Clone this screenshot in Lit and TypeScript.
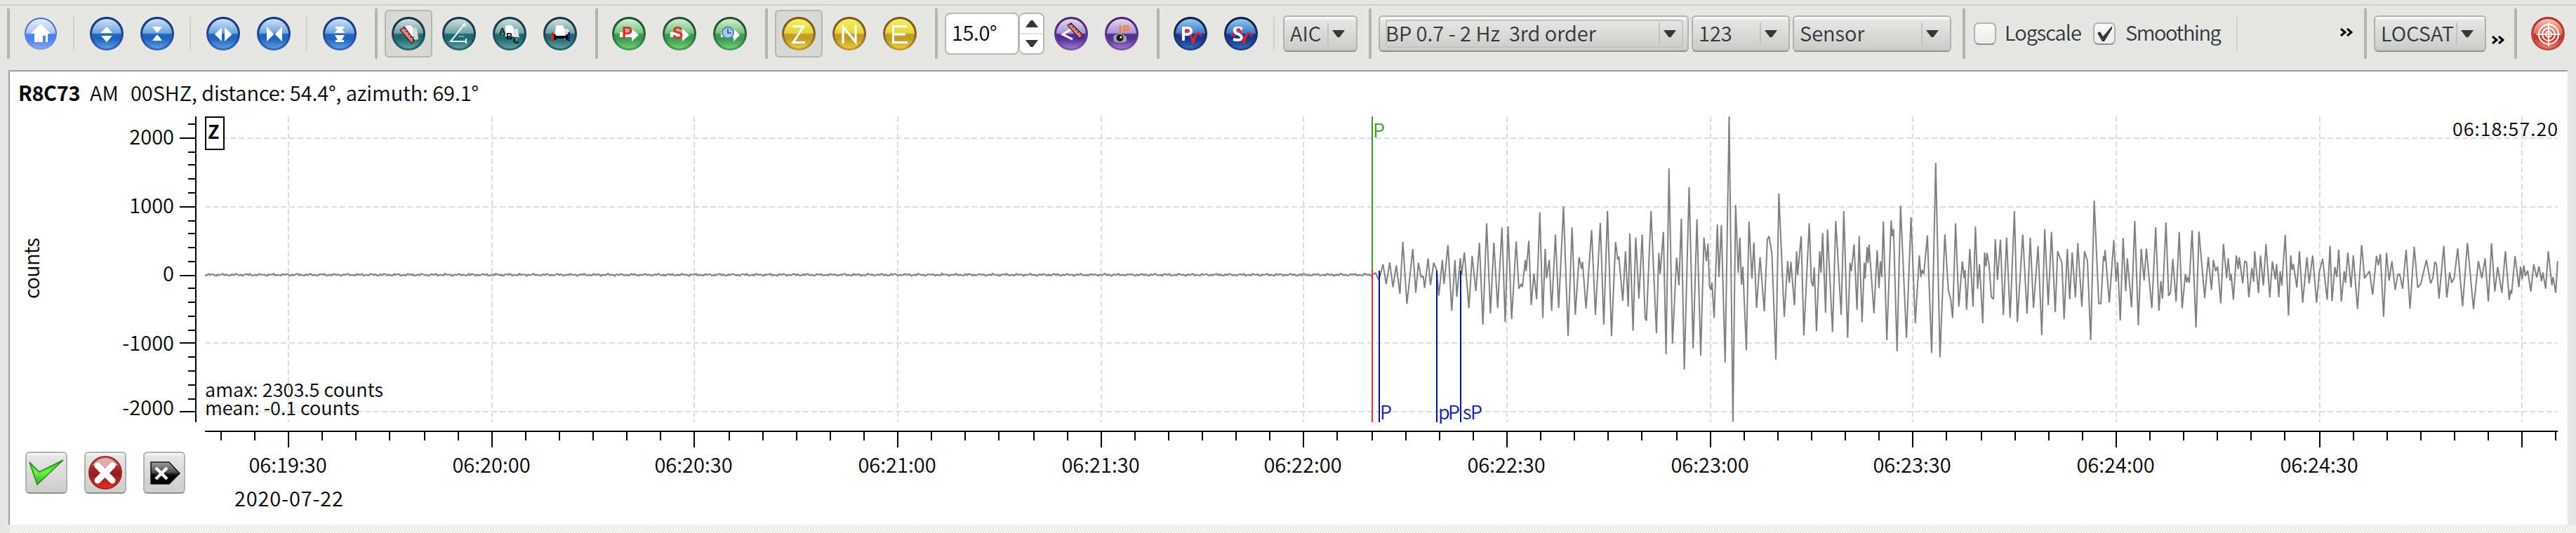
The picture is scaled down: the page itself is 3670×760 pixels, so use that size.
import { LitElement, css, html, svg } from 'lit';
import type { SVGTemplateResult, TemplateResult } from 'lit';
import { customElement, property } from 'lit/decorators.js';
import { classMap } from 'lit/directives/class-map.js';

type Tone = 'home' | 'blue' | 'teal' | 'green' | 'gold' | 'purple' | 'navy' | 'red';

interface Palette {
	rim: string;
	rimLow: string;
	top: string;
	mid: string;
	core: string;
	low: string;
}

const palettes: Record<Tone, Palette> = {
	home: { rim: '#3c68d8', rimLow: '#7f9ad8', top: '#e4eaf8', mid: '#b4c6f0', core: '#4a82f8', low: '#8aa4e0' },
	blue: { rim: '#0d2f86', rimLow: '#3c6cc0', top: '#cfe2f2', mid: '#6ea4dc', core: '#1f66c0', low: '#5f9ae0' },
	teal: { rim: '#0f2c40', rimLow: '#2a6a70', top: '#cfe0e0', mid: '#6fa4a6', core: '#1f6a70', low: '#5fa0a4' },
	green: { rim: '#1c4a30', rimLow: '#48a858', top: '#d4f0d0', mid: '#72c47c', core: '#3a9c50', low: '#72cc74' },
	gold: { rim: '#7c5214', rimLow: '#c8a030', top: '#f4f068', mid: '#e4d43c', core: '#c49c28', low: '#e4cc3c' },
	purple: { rim: '#4c2070', rimLow: '#8458a8', top: '#e0d8f0', mid: '#a894d4', core: '#54309c', low: '#9478c8' },
	navy: { rim: '#0a1440', rimLow: '#204890', top: '#90c8ec', mid: '#3c7cc8', core: '#143890', low: '#3468b8' },
	red: { rim: '#b42c2c', rimLow: '#c84c40', top: '#f4c0b4', mid: '#e07060', core: '#c83c30', low: '#e88070' },
};

const glyphs: Record<string, SVGTemplateResult> = {
	home: svg`<path fill="#fff" d="M24 10 38 24H34V36H31V27H27V36H15V24H10Z"/>`,
	tall: svg`<path fill="#fff" d="M24 14 32.500 23H15.500ZM24 36 16 27H32Z"/>`,
	squash: svg`<path fill="#fff" d="M17 14H31L25 22H23ZM17 34H31L25 26H23Z"/>`,
	wide: svg`<path fill="#fff" d="M22 15V35L12 25ZM26 15V35L36.500 25Z"/>`,
	narrow: svg`<path fill="#fff" d="M14 14 24 25 14 35ZM36 14 26 25 36 35Z"/>`,
	fit: svg`<path fill="#fff" d="M18 14H30V17H27L31 23H17L21 17H18ZM17 26H31L27 33H30V36H18V33H21Z"/>`,
	ruler: svg`
		<path fill="#d4dada" stroke="#a0a8a8" stroke-width=".7" d="M29 15H36L38 32 32 33Z"/>
		<path fill="#fff" stroke="#a8b0b0" stroke-width=".7" d="M19 12H28L31 17 32 28H19Z"/>
		<path fill="#f07c7c" stroke="#302020" stroke-width="1.2" d="M12 19 18 14 32 33 29 38Z"/>
		<path stroke="#301818" stroke-width="1.4" stroke-dasharray="2 3" fill="none" d="M18 16 31 34"/>`,
	angle: svg`
		<path fill="none" stroke="#f4f8f8" stroke-width="2" d="M33 9 12 35H34M34 31V38M29 11 34 13"/>
		<path stroke="#9cc4c4" stroke-width="2" stroke-dasharray="2 1" d="M24 28H31"/>`,
	abc: svg`
		<path fill="#e0e4e4" d="M30 17H36L38 32H31Z"/>
		<path fill="#fff" d="M18 13Q24 10 29 14L31 28H18Z"/>
		<g fill="#080c10" font-weight="700" font-size="13">
			<text x="9" y="25">A</text><text x="19" y="32">B</text><text x="29" y="38">C</text>
		</g>`,
	span: svg`
		<path fill="#dce0e0" d="M30 17H36L38 32H30Z"/>
		<path fill="#fff" d="M18 12H27L30 16V28H16Z"/>
		<path fill="#080c10" d="M14 25H18V27H32V25H35V33H32V31H18V33H14Z"/>
		<path stroke="#f01c1c" stroke-width="3" d="M13.500 22V35"/>
		<path stroke="#202080" stroke-width="3" d="M36.500 22V35"/>`,
	pickP: svg`
		<path fill="#fff" d="M11 22H28V17L38 26 28 35V29H11Z"/>
		<text x="14" y="31" fill="#f02828" font-weight="900" font-size="23">P</text>`,
	pickS: svg`
		<path fill="#fff" d="M11 22H28V17L38 26 28 35V29H11Z"/>
		<text x="14" y="31" fill="#f02828" font-weight="900" font-size="23">S</text>`,
	pickClock: svg`
		<path fill="#fff" d="M11 22H30V18L38 26 29 35V29H11Z"/>
		<circle cx="21" cy="22.500" r="8" fill="#a8c8ec" stroke="#5484b8" stroke-width="2"/>
		<path fill="none" stroke="#284c80" stroke-width="1.500" d="M21 17V23H26"/>`,
	letterZ: svg`<path fill="none" stroke="#fff" stroke-width="3" d="M15 13.500H31L16 36.500H33"/>`,
	letterN: svg`<path fill="none" stroke="#fff" stroke-width="3" d="M15 38V14L33 36V12"/>`,
	letterE: svg`<path fill="none" stroke="#fff" stroke-width="3" d="M34 13.500H14.500V36.500H35M15 25H32"/>`,
	alignRuler: svg`
		<path fill="none" stroke="#fff" stroke-width="3" d="M25 17 12 25 26 32"/>
		<path fill="#f08080" stroke="#201820" stroke-width="1.2" d="M19 12 24 9 41 26 36 31Z"/>
		<path stroke="#301820" stroke-width="1.5" stroke-dasharray="2 3" d="M23 10 39 27"/>`,
	eyeIp: svg`
		<path stroke="#e88840" stroke-width="3" d="M22 12V29"/>
		<path fill="none" stroke="#f08838" stroke-width="3" d="M27.500 22V13.500H33V19H28"/>
		<path fill="#a4a4a0" d="M12 28Q22 20 31 29V35Q22 38 13 35Z"/>
		<circle cx="21.500" cy="30" r="5" fill="#181818"/><circle cx="23" cy="29" r="1.500" fill="#fff"/>`,
	autoP: svg`
		<path fill="none" stroke="#f02020" stroke-width="2.500" d="M9 26 14 27 18 17 22 18 28 36 33 24 36 23 40 28"/>
		<path fill="none" stroke="#fff" stroke-width="4" d="M14 34V16H20Q25 16 25 20.500 25 25 20 25H15"/>
		<path fill="none" stroke="#f02020" stroke-width="3" d="M17 19H22M24 25 28 36 31 26"/>`,
	autoS: svg`
		<path fill="none" stroke="#f02020" stroke-width="2.500" d="M9 26 14 27 18 17 22 18 28 36 33 24 36 23 40 28"/>
		<path fill="none" stroke="#fff" stroke-width="4" d="M26 17Q14 14 15 20 16 24 21 25 27 28 24 32 20 34 13 32"/>
		<path fill="none" stroke="#f02020" stroke-width="3" d="M18 18H23M26 32 28 36 31 26"/>`,
	target: svg`
		<g fill="none" stroke="#fff" stroke-width="2">
			<circle cx="25" cy="25" r="14"/><circle cx="25" cy="25" r="9"/><circle cx="25" cy="25" r="4"/>
			<path d="M25 8V42M8 25H42"/>
		</g>`,
};

@customElement('orb-button')
export class OrbButtonElement extends LitElement {
	@property() tone: Tone = 'blue';
	@property() glyph = 'tall';
	@property({ type: Boolean, reflect: true }) checked = false;

	render() {
		const p = palettes[this.tone];
		return html`<svg viewBox="0 0 48 48" width="48" height="48">
			<defs>
				<linearGradient id="rim" x2="0" y2="1">
					<stop stop-color=${p.rim} />
					<stop offset=".5" stop-color=${p.rim} stop-opacity=".9" />
					<stop offset="1" stop-color=${p.rimLow} />
				</linearGradient>
				<linearGradient id="body" x2="0" y2="1">
					<stop stop-color=${p.top} />
					<stop offset=".48" stop-color=${p.mid} />
					<stop offset=".52" stop-color=${p.core} />
					<stop offset=".68" stop-color=${p.core} />
					<stop offset="1" stop-color=${p.low} />
				</linearGradient>
			</defs>
			<circle cx="24" cy="24" r=${this.tone === 'home' ? 23 : 24} fill="url(#rim)" />
			<circle cx="24" cy="24" r="21" fill="url(#body)" />
			${glyphs[this.glyph]}
		</svg>`;
	}

	static styles = css`
		:host {
			box-sizing: border-box;
			display: flex;
			flex: none;
			align-items: center;
			justify-content: center;
			width: 68px;
			height: 68px;
			border: 2px solid transparent;
			border-radius: 6px;
			font-family: 'Liberation Sans', sans-serif;
		}

		:host([checked]) {
			background: #d8d8d6;
			border-color: #b6b6b3;
		}
	`;
}

@customElement('combo-box')
export class ComboBoxElement extends LitElement {
	@property() value = '';
	@property({ type: Number }) width = 106;
	@property({ type: Boolean, reflect: true }) focused = false;

	render() {
		return html`<div class="combo" style="width:${this.width}px">
			<span class=${classMap({ value: true, ring: this.focused })}>${this.value}</span>
			<span class="arrow">
				<svg width="18" height="12"><path fill="#31373a" d="M0 1H18L10.500 11H7.500Z" /></svg>
			</span>
		</div>`;
	}

	static styles = css`
		:host {
			display: block;
			flex: none;
		}

		.combo {
			position: relative;
			box-sizing: border-box;
			display: flex;
			align-items: center;
			height: 52px;
			border: 2px solid #b2b2af;
			border-bottom-color: #91918c;
			border-radius: 6px;
			background: linear-gradient(#f6f6f6 3px, #e6e6e5 4px, #cbcbca);
			padding-left: 8px;
		}

		.value {
			flex: 1;
			line-height: 44px;
			white-space: pre;
			margin-top: -4px;
		}

		.ring::before {
			content: '';
			position: absolute;
			inset: 4px 6px 4px 8px;
			border: 2px solid #c3c3c1;
			border-radius: 4px;
		}

		.arrow {
			display: flex;
			align-items: center;
			height: 32px;
			padding: 0 16px 0 5px;
			border-left: 2px solid #c2c2c0;
		}
	`;
}

// Vertices of the filtered trace. Each block has its own raster, placed by origin and scale.
const traceBlocks = [
	{
		x: 1880,
		y: 140,
		sx: 2.6133,
		points:
			'196,757 208,747 219,775 225,760 236,710 248,795 261,703 273,808 286,715 299,837 310,615 325,880 347,645 358,832 368,704 378,765 386,762 391,812 404,686 413,800 425,704 436,735 444,845 457,692 463,795 478,628 492,910 504,692 511,850 524,685 529,755 539,660 556,898 568,674 582,825 595,618 608,968 622,535 636,920 649,618 663,898 679,553 691,958 702,548 715,945 732,613 742,815 750,795 755,808 766,692 769,740 779,610 788,885 798,750 808,860 820,488 831,940 840,645 845,770 855,692 864,910 878,583 890,898 908,463 925,1017 940,553 952,927 966,680 975,730 979,700 992,900 1013,564 1027,928 1045,533 1058,968 1072,482 1087,1018 1102,615 1110,690 1114,678 1129,867 1139,655 1149,892 1155,578 1167,995 1177,596 1189,857 1201,583 1212,940 1217,952 1234,482 1254,1005 1263,662 1268,752 1280,572 1290,1095 1301,300 1314,1050 1329,682 1338,800 1347,515 1358,1160',
	},
	{
		x: 2400,
		y: 140,
		sx: 2.6133,
		points:
			'17,380 32,1070 46,518 60,1102 72,597 81,697 87,622 93,805 98,820 102,788 110,940 122,540 128,765 137,542 151,1130 166,78 180,1384 190,457 200,748 206,597 212,798 217,720 230,1078 240,528 251,772 258,618 268,897 281,680 297,912 308,605 314,590 325,665 340,1118 351,408 371,935 384,697 390,790 396,700 409,886 417,655 421,755 434,590 444,1015 464,535 472,785 478,805 483,724 491,997 503,655 508,747 514,577 525,918 532,562 551,1000 563,525 583,927 593,483 607,1025 616,704 621,740 631,626 642,905 650,590 661,958 669,704 672,772 680,637 683,705 687,626 705,920 717,650 724,812 729,698 734,765 740,528 753,1035 769,523 773,590 778,560 791,1083 804,460 826,1025 843,510 859,963 874,673 880,765 884,735 891,752 904,587 920,1090 935,277 951,1108 969,583 982,820 991,862 998,940 1009,535 1021,892 1034,698 1041,770 1044,735 1050,905 1062,645 1074,892 1083,548 1091,815 1098,710 1110,963 1117,660 1122,720 1126,662 1134,715 1142,850 1150,860 1157,603 1165,778 1176,605 1187,928 1199,596 1212,940 1228,482 1239,958 1259,583 1275,922 1287,597 1299,898 1316,632 1330,1013 1341,560 1354,886 1366,572 1380,915 1389,655 1405,705 1413,946 1425,645 1434,860 1443,660 1455,852 1464,620 1479,892 1489,655 1500,697 1512,1035 1525,438 1542,880 1550,878 1560,675 1563,697',
	},
	{
		x: 2950,
		y: 220,
		sx: 2.17778,
		points:
			'107,410 120,634 134,367 141,545 146,462 154,711 163,358 171,586 176,445 189,654 199,285 210,731 219,405 228,540 235,403 252,658 264,312 274,670 280,542 285,617 296,292 304,605 310,592 317,447 327,630 337,332 346,658 356,512 360,548 363,525 368,550 377,325 389,742 398,330 416,615 427,440 437,580 443,452 450,500 456,480 466,638 474,383 484,530 489,445 495,540 498,512 505,622 514,433 520,490 523,440 534,552 540,457 546,462 553,612 562,487 568,545 571,415 583,593 589,433 598,562 606,384 618,612 626,458 635,535 639,470 646,612 650,500 655,562 666,345 676,690 683,433 687,495 691,470 702,570 710,415 720,635 733,440 740,552 751,433 763,635 772,500 782,447 796,622 805,392 811,628 820,482 826,525 832,408 840,630 849,500 853,550 860,420 870,570 877,432 890,662 903,388 912,530 927,500 937,600 949,435 955,475 961,427 971,695 980,421 988,540 997,457 1007,580 1015,515 1021,512 1030,575 1041,408 1053,660 1066,395 1077,570 1086,555 1104,452 1117,552 1124,530 1130,460 1135,470 1143,617 1158,392 1167,613 1176,505 1182,550 1190,530 1201,402 1216,650 1231,380 1250,662 1265,457 1276,530 1286,445 1296,630 1306,380 1316,587 1325,482 1338,592 1349,415 1361,622 1365,580 1368,597 1379,435 1391,568 1396,480 1401,535 1406,475 1411,520 1418,498 1428,587 1437,470 1446,527 1453,480 1461,543 1465,505 1474,575 1482,415 1493,560 1497,525 1505,593 1511,457',
	},
];

function buildTrace(): string {
	const out: string[] = [];
	// quiet stretch ahead of the onset
	for (let x = 292, i = 0; x < 1955; x += 2, i++) {
		const n = Math.sin(i * 1.9) * 0.9 + Math.sin(i * 0.71 + 2) * 0.8 + Math.sin(i * 3.3) * 0.5;
		out.push(`${x},${(391.8 + n).toFixed(1)}`);
	}
	for (const block of traceBlocks) {
		for (const pair of block.points.split(' ')) {
			const [px, py] = pair.split(',').map(Number);
			out.push(`${(block.x + px / block.sx).toFixed(1)},${(block.y + py / 3).toFixed(1)}`);
		}
	}
	return out.join(' ');
}

const trace = buildTrace();

// centre of the 2px line that v falls on
const snap = (v: number) => Math.floor(v / 2) * 2 + 1;
const countY = (counts: number) => snap(392.2 - counts * 0.0977);
const timeX = (seconds: number) => snap(411.3 + (seconds - 30) * 9.643);

const counts = [
	{ value: 2000, baseline: 206 },
	{ value: 1000, baseline: 304 },
	{ value: 0, baseline: 401 },
	{ value: -1000, baseline: 500 },
	{ value: -2000, baseline: 592 },
];

const halfMinutes = Array.from({ length: 12 }, (_, i) => 30 + i * 30);

function clock(seconds: number): string {
	const minute = 19 + Math.floor(seconds / 60);
	return `06:${minute}:${String(seconds % 60).padStart(2, '0')}`;
}

@customElement('trace-view')
export class TraceViewElement extends LitElement {
	render() {
		return html`
			<header><b>R8C73</b><span class="net">AM</span><span class="info">00SHZ, distance: 54.4°, azimuth: 69.1°</span></header>
			<svg class="plot" viewBox="14 158 3644 450" width="3644" height="450">
				${this.grid()} ${this.countAxis()}
				<path class="zero" d="M292 391H3644" />
				<polyline class="trace" points=${trace} />
				${this.phases()}
				<rect x="293" y="167" width="26" height="46" fill="#fff" stroke="#000" stroke-width="2" />
				<text x="296" y="198" font-weight="700" class="component">Z</text>
				<text class="small" x="292" y="566" textLength="254">amax: 2303.5 counts</text>
				<text class="small" x="292" y="592" textLength="220">mean: -0.1 counts</text>
				<text class="small" x="3494" y="194" textLength="150">06:18:57.20</text>
			</svg>
			<div class="bottom">
				<div class="actions">${this.actions()}</div>
				${this.timeAxis()}
			</div>
		`;
	}

	protected grid() {
		return svg`<g class="grid">
			${counts.map((c) => svg`<path d="M292 ${countY(c.value)}H3644" />`)}
			${halfMinutes.map((s) => svg`<path d="M${timeX(s)} 166V602" />`)}
		</g>`;
	}

	protected countAxis() {
		const minor: number[] = [];
		for (let v = -2000; v <= 2200; v += 200) minor.push(v);
		return svg`
			<g class="axis">
				<path d="M279 166V602" />
				${minor.map((v) => svg`<path d="M${v % 1000 ? 268 : 256} ${countY(v)}H280" />`)}
			</g>
			${counts.map((c) => svg`<text x="248" y=${c.baseline} text-anchor="end">${c.value}</text>`)}
			<text transform="translate(56 426) rotate(-90)" textLength="87">counts</text>
		`;
	}

	protected phases() {
		return svg`
			<path stroke="#3a9a28" stroke-width="2" d="M1955 166V384" />
			<path stroke="#f22828" stroke-width="2" d="M1955 384V602" />
			<path stroke="#001496" stroke-width="2" d="M1965 386V602M2047 386V602M2081 386V602" />
			<text class="small green" x="1956" y="196">P</text>
			<g class="small blue">
				<text x="1966" y="598">P</text>
				<text x="2049" y="598" textLength="31">pP</text>
				<text x="2084" y="598" textLength="28">sP</text>
			</g>
		`;
	}

	protected timeAxis() {
		const ticks: number[] = [];
		for (let s = 20; s <= 365; s += 5) ticks.push(s);
		return html`<svg class="time" viewBox="292 608 3366 140" width="3366" height="140">
			<g class="axis">
				<path d="M292 615H3644" />
				${ticks.map((s) => svg`<path d="M${Math.min(timeX(s), 3643)} 616V${s % 30 ? 628 : 638}" />`)}
			</g>
			${halfMinutes
				.slice(0, 11)
				.map((s) => svg`<text x=${timeX(s) - 1} y="674" text-anchor="middle">${clock(s)}</text>`)}
			<text x="334" y="722" textLength="155">2020-07-22</text>
		</svg>`;
	}

	protected actions(): TemplateResult {
		return html`
			<button>
				<svg viewBox="0 0 60 60" width="60" height="60">
					<defs>
						<linearGradient id="tick" x2="0" y2="1">
							<stop stop-color="#38b828" />
							<stop offset=".5" stop-color="#68f448" />
							<stop offset="1" stop-color="#38a828" />
						</linearGradient>
					</defs>
					<path fill="url(#tick)" stroke="#2c8420" stroke-width="1.500" d="M6 15 20 29 54 12 17 47Z" />
				</svg>
			</button>
			<button>
				<svg viewBox="0 0 60 60" width="60" height="60">
					<defs>
						<linearGradient id="stop" x2="0" y2="1">
							<stop stop-color="#c87478" />
							<stop offset=".4" stop-color="#a02024" />
							<stop offset=".6" stop-color="#981c1c" />
							<stop offset="1" stop-color="#ec2c24" />
						</linearGradient>
					</defs>
					<circle cx="30" cy="30" r="23" fill="url(#stop)" stroke="#a42828" stroke-width="2" />
					<path fill="#e8c4c4" d="M12 19Q30 -1 48 19 30 27 12 19Z" opacity=".8" />
					<path stroke="#fff" stroke-width="9" stroke-linecap="round" d="M19 20 40 41M40 20 19 41" />
				</svg>
			</button>
			<button>
				<svg viewBox="0 0 60 60" width="60" height="60">
					<defs>
						<linearGradient id="tag" x2="0" y2="1">
							<stop stop-color="#a0a0a0" />
							<stop offset=".45" stop-color="#505050" />
							<stop offset=".6" stop-color="#080808" />
							<stop offset="1" stop-color="#000" />
						</linearGradient>
					</defs>
					<path fill="url(#tag)" stroke="#101010" stroke-width="1.500" d="M11 15H37L52 31 37 46H11Z" />
					<path stroke="#fff" stroke-width="4.500" d="M18 23 34 39M34 23 18 39" />
				</svg>
			</button>
		`;
	}

	static styles = css`
		:host {
			display: flex;
			flex-direction: column;
			height: 646px;
			background: #fff;
			border: 2px solid #9f9f9e;
			border-width: 2px 0 0 2px;
		}

		header {
			display: flex;
			align-items: center;
			height: 56px;
			padding: 2px 0 0 12px;
			box-sizing: border-box;
			white-space: pre;
		}

		b {
			width: 102px;
			letter-spacing: -0.4px;
		}

		.net {
			width: 58px;
		}

		.info {
			letter-spacing: -0.07px;
		}

		svg {
			display: block;
			flex: none;
		}

		text {
			font-size: 29px;
			fill: #000;
		}

		.small,
		.small text,
		.component {
			font-size: 27px;
		}

		.green {
			fill: #3a9a28;
		}

		.blue text {
			fill: #101e9c;
		}

		.grid path {
			stroke: #dcdcdc;
			stroke-width: 2;
			stroke-dasharray: 8 4;
		}

		.axis path {
			stroke: #000;
			stroke-width: 2;
		}

		.zero {
			stroke: #e6e6f6;
			stroke-width: 2;
		}

		.trace {
			fill: none;
			stroke: #808080;
			stroke-width: 2;
			stroke-linejoin: bevel;
		}

		.bottom {
			display: flex;
		}

		.actions {
			box-sizing: border-box;
			display: flex;
			gap: 24px;
			width: 278px;
			padding: 36px 0 0 22px;
		}

		button {
			box-sizing: border-box;
			display: grid;
			place-content: center;
			width: 60px;
			height: 60px;
			padding: 0;
			border: 2px solid #b2b2af;
			border-bottom-color: #91918c;
			border-radius: 6px;
			background: linear-gradient(#f6f6f6 2px, #e6e6e5 4px, #cdcdcc);
		}
	`;
}

@customElement('app-root')
export class AppRootElement extends LitElement {
	render() {
		return html`
			<nav>
				${this.group(
					this.orb('home', 'home'),
					this.separator(),
					this.orb('blue', 'tall'),
					this.orb('blue', 'squash'),
					this.separator(),
					this.orb('blue', 'wide'),
					this.orb('blue', 'narrow'),
					this.separator(),
					this.orb('blue', 'fit'),
				)}
				${this.group(
					this.orb('teal', 'ruler', true),
					this.orb('teal', 'angle'),
					this.orb('teal', 'abc'),
					this.orb('teal', 'span'),
				)}
				${this.group(this.orb('green', 'pickP'), this.orb('green', 'pickS'), this.orb('green', 'pickClock'))}
				${this.group(this.orb('gold', 'letterZ', true), this.orb('gold', 'letterN'), this.orb('gold', 'letterE'))}
				${this.group(this.spinner(), this.orb('purple', 'alignRuler'), this.orb('purple', 'eyeIp'))}
				${this.group(
					this.orb('navy', 'autoP'),
					this.orb('navy', 'autoS'),
					this.separator(),
					this.combo('AIC', 106),
				)}
				${this.group(
					this.combo('BP 0.7 - 2 Hz  3rd order', 442, true),
					this.combo('123', 140),
					this.combo('Sensor', 226),
				)}
				<div class="group options">
					<i class="handle"></i>
					${this.check('Logscale', false)} ${this.check('Smoothing', true)} ${this.separator()}
					${this.overflow()}
				</div>
				<div class="group locator">
					<i class="handle"></i>
					${this.combo('LOCSAT', 160)} ${this.overflow()}
				</div>
				<div class="group">
					<i class="handle"></i>
					${this.orb('red', 'target')}
				</div>
			</nav>
			<trace-view></trace-view>
			<div class="next"></div>
		`;
	}

	protected group(...items: TemplateResult[]) {
		return html`<div class="group"><i class="handle"></i>${items}</div>`;
	}

	protected orb(tone: Tone, glyph: string, checked = false) {
		return html`<orb-button tone=${tone} glyph=${glyph} ?checked=${checked}></orb-button>`;
	}

	protected separator() {
		return html`<i class="separator"></i>`;
	}

	protected combo(value: string, width: number, focused = false) {
		return html`<combo-box .value=${value} .width=${width} ?focused=${focused}></combo-box>`;
	}

	protected overflow() {
		return html`<svg class="overflow" width="18" height="12">
			<path fill="none" stroke="#000" stroke-width="3" d="M1 1 7 6 1 11M10 1 16 6 10 11" />
		</svg>`;
	}

	protected spinner() {
		return html`<div class="spinner">
			<span class="amount">15.0°</span>
			<span class="steps">
				<svg width="18" height="12"><path fill="#31373a" d="M0 11H18L10.500 1H7.500Z" /></svg>
				<svg width="18" height="12"><path fill="#31373a" d="M0 1H18L10.500 11H7.500Z" /></svg>
			</span>
		</div>`;
	}

	protected check(label: string, on: boolean) {
		return html`<label class=${on ? 'on' : 'off'}>
			<span class="box">
				${on ? html`<svg width="28" height="28"><path fill="#31373a" d="M4 13 8 11 12 18 25 3V7L14 25H11Z" /></svg>` : ''}
			</span>
			<span class="caption">${label}</span>
		</label>`;
	}

	static styles = css`
		:host {
			display: block;
			box-sizing: border-box;
			height: 760px;
			padding: 0 12px 0 12px;
			overflow: hidden;
			background: #e6e6e4;
			color: #000;
			font: 350 29px/36px 'Noto Sans CJK SC', 'Noto Sans', sans-serif;
		}

		nav {
			display: flex;
			align-items: center;
			height: 86px;
			margin: 6px -12px 8px;
			padding-left: 10px;
			box-sizing: border-box;
			border-top: 2px solid #d0d0ce;
			padding-bottom: 4px;
			color: #31373a;
			overflow: hidden;
		}

		.group {
			display: flex;
			flex: none;
			align-items: center;
			gap: 4px;
			padding-right: 16px;
		}

		.handle {
			width: 4px;
			height: 72px;
			margin-right: 6px;
			background: #b4b4b2;
		}

		.separator {
			width: 2px;
			height: 48px;
			margin: 0 8px;
			background: #cfcfcd;
		}

		.spinner {
			display: flex;
			height: 60px;
			width: 142px;
		}

		.spinner > * {
			box-sizing: border-box;
			background: #fff;
			border: 2px solid #b6b6b3;
			border-radius: 8px;
		}

		.amount {
			width: 106px;
			padding-left: 8px;
			line-height: 50px;
			letter-spacing: -0.4px;
			color: #000;
		}

		.steps {
			display: grid;
			place-items: center;
			width: 36px;
			border-left-width: 1px;
			background: linear-gradient(#fff 27px, #e2e2e0 27px 29px, #fff 29px);
		}

		.options {
			box-sizing: border-box;
			width: 572px;
		}

		.options .separator {
			margin: 0 auto 0 14px;
		}

		label {
			display: flex;
			gap: 12px;
			align-items: center;
			margin-left: 2px;
		}

		label.on {
			margin-left: 10px;
			gap: 14px;
		}

		.caption {
			width: 112px;
			margin-top: -6px;
			letter-spacing: -1px;
			white-space: nowrap;
		}

		.on .caption {
			width: 140px;
			letter-spacing: -1.4px;
		}

		.box {
			box-sizing: border-box;
			flex: none;
			width: 32px;
			height: 32px;
			border: 2px solid #b2b2af;
			border-bottom-color: #91918c;
			border-radius: 7px;
			background: linear-gradient(#fafafa, #ececeb);
		}

		.box svg {
			display: block;
		}

		.overflow {
			margin-bottom: 4px;
		}

		.locator {
			padding-right: 14px;
		}

		.locator .overflow {
			margin: 18px 0 0 4px;
		}

		.next {
			height: 12px;
			margin: 0 -12px 0 2px;
			background: conic-gradient(#fafaf9 25%, #e6e6e4 0 50%, #fafaf9 0 75%, #e6e6e4 0) 0 0 / 4px 6px;
		}
	`;
}
